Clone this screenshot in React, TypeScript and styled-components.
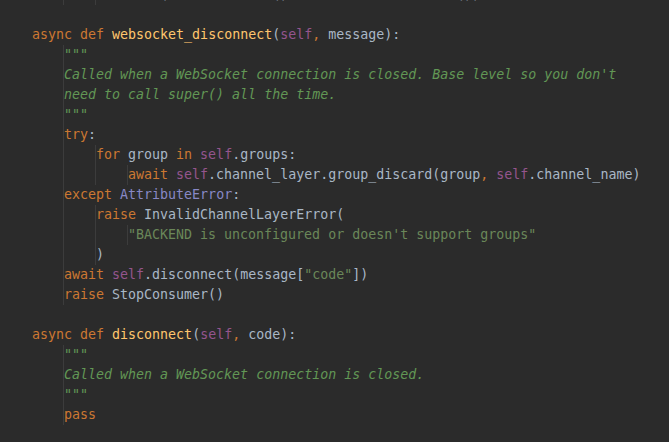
import React from 'react'
import styled, { createGlobalStyle } from 'styled-components'

type Kind = 'kw' | 'fn' | 'self' | 'plain' | 'doc' | 'str' | 'builtin' | 'comma'
type Token = [Kind, string]
interface LineData {
    guides: number[]
    indent: number
    tokens: Token[]
}

const palette: Record<Kind, string> = {
    kw: '#cc7832',
    fn: '#ffc66d',
    self: '#94558d',
    plain: '#a9b7c6',
    doc: '#629755',
    str: '#6a8759',
    builtin: '#8888c6',
    comma: '#cc7832',
}

const GlobalStyle = createGlobalStyle`
    html, body {
        margin: 0;
        padding: 0;
        background: #2b2b2b;
        overflow: hidden;
    }
`

const Editor = styled.div`
    width: 669px;
    height: 442px;
    overflow: hidden;
    background: #2b2b2b;
    font-family: 'DejaVu Sans Mono', 'Liberation Mono', monospace;
    font-size: 13.3px;
`

const CodeBlock = styled.div`
    display: flex;
    flex-direction: column;
    margin-top: -15px;
`

const Row = styled.div`
    display: flex;
    height: 20px;
    line-height: 20px;
    white-space: pre;
`

const IndentUnit = styled.span<{ $guide: boolean }>`
    flex: 0 0 32px;
    box-sizing: border-box;
    height: 20px;
    border-right: 1px solid ${(p) => (p.$guide ? '#3c3c3c' : 'transparent')};
    margin-right: 0;
`

const Tok = styled.span<{ $kind: Kind }>`
    color: ${(p) => palette[p.$kind]};
    font-style: ${(p) => (p.$kind === 'doc' ? 'italic' : 'normal')};
`

const blank: LineData = { guides: [], indent: 0, tokens: [] }
const P = (s: string): Token => ['plain', s]
const K = (s: string): Token => ['kw', s]
const S: Token = ['self', 'self']
const C: Token = ['comma', ',']
const D = (s: string): Token => ['doc', s]

const lines: LineData[] = [
    {
        guides: [1, 2],
        indent: 3,
        tokens: [S, P('.set(data='), S, P('.bar() '), K('or'), P(' '), S, P('.defaults.bar())')],
    },
    blank,
    {
        guides: [],
        indent: 1,
        tokens: [K('async def '), ['fn', 'websocket_disconnect'], P('('), S, C, P(' message):')],
    },
    { guides: [1], indent: 2, tokens: [D('"""')] },
    {
        guides: [1],
        indent: 2,
        tokens: [D("Called when a WebSocket connection is closed. Base level so you don't")],
    },
    { guides: [1], indent: 2, tokens: [D('need to call super() all the time.')] },
    { guides: [1], indent: 2, tokens: [D('"""')] },
    { guides: [1], indent: 2, tokens: [K('try'), P(':')] },
    { guides: [1, 2], indent: 3, tokens: [K('for'), P(' group '), K('in'), P(' '), S, P('.groups:')] },
    {
        guides: [1, 2, 3],
        indent: 4,
        tokens: [K('await'), P(' '), S, P('.channel_layer.group_discard(group'), C, P(' '), S, P('.channel_name)')],
    },
    { guides: [1], indent: 2, tokens: [K('except'), P(' '), ['builtin', 'AttributeError'], P(':')] },
    { guides: [1, 2], indent: 3, tokens: [K('raise'), P(' InvalidChannelLayerError(')] },
    {
        guides: [1, 2, 3],
        indent: 4,
        tokens: [['str', '"BACKEND is unconfigured or doesn\'t support groups"']],
    },
    { guides: [1, 2], indent: 3, tokens: [P(')')] },
    {
        guides: [1],
        indent: 2,
        tokens: [K('await'), P(' '), S, P('.disconnect(message['), ['str', '"code"'], P('])')],
    },
    { guides: [1], indent: 2, tokens: [K('raise'), P(' StopConsumer()')] },
    blank,
    {
        guides: [],
        indent: 1,
        tokens: [K('async def '), ['fn', 'disconnect'], P('('), S, C, P(' code):')],
    },
    { guides: [1], indent: 2, tokens: [D('"""')] },
    { guides: [1], indent: 2, tokens: [D('Called when a WebSocket connection is closed.')] },
    { guides: [1], indent: 2, tokens: [D('"""')] },
    { guides: [1], indent: 2, tokens: [K('pass')] },
    blank,
]

const CodeLine = ({ line }: { line: LineData }): JSX.Element => (
    <Row>
        {Array.from({ length: line.indent }, (_, i) => (
            <IndentUnit key={i} $guide={line.guides.includes(i)} />
        ))}
        {line.tokens.map(([kind, text], i) => (
            <Tok key={i} $kind={kind}>
                {text}
            </Tok>
        ))}
    </Row>
)

export default function App(): JSX.Element {
    return (
        <Editor>
            <GlobalStyle />
            <CodeBlock>
                {lines.map((line, i) => (
                    <CodeLine key={i} line={line} />
                ))}
            </CodeBlock>
        </Editor>
    )
}
